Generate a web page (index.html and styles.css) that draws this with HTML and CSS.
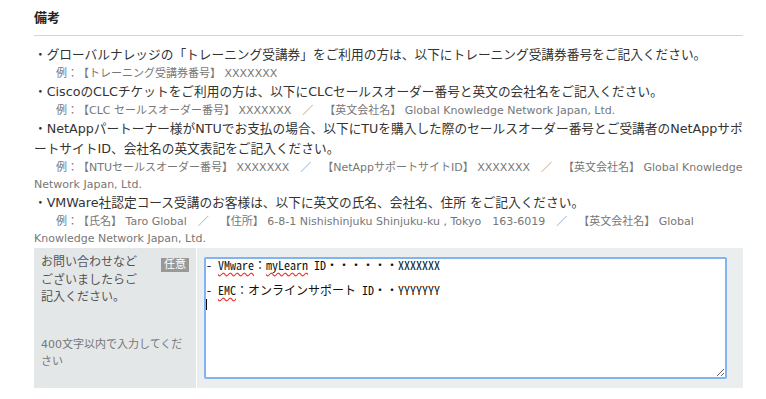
FILE: index.html
```html
<!DOCTYPE html>
<html lang="ja">
<head>
  <meta charset="UTF-8">
  <meta name="viewport" content="width=device-width, initial-scale=1.0">
  <title>備考</title>
  <link rel="stylesheet" href="styles.css">
</head>
<body>

  <!-- 備考 -->
  <div class="section">
    <h2 class="section-title">備考</h2>

    <div class="notes">
      <p class="note">・グローバルナレッジの「トレーニング受講券」をご利用の方は、以下にトレーニング受講券番号をご記入ください。</p>
      <p class="example">　　例：【トレーニング受講券番号】 XXXXXXX</p>
      <p class="note">・CiscoのCLCチケットをご利用の方は、以下にCLCセールスオーダー番号と英文の会社名をご記入ください。</p>
      <p class="example">　　例：【CLC セールスオーダー番号】 XXXXXXX　／　【英文会社名】 Global Knowledge Network Japan, Ltd.</p>
      <p class="note">・NetAppパートーナー様がNTUでお支払の場合、以下にTUを購入した際のセールスオーダー番号とご受講者のNetAppサポートサイトID、会社名の英文表記をご記入ください。</p>
      <p class="example">　　例：【NTUセールスオーダー番号】 XXXXXXX　／　【NetAppサポートサイトID】 XXXXXXX　／　【英文会社名】 Global Knowledge Network Japan, Ltd.</p>
      <p class="note">・VMWare社認定コース受講のお客様は、以下に英文の氏名、会社名、住所 をご記入ください。</p>
      <p class="example">　　例：【氏名】 Taro Global　／　【住所】 6-8-1 Nishishinjuku Shinjuku-ku , Tokyo　163-6019　／　【英文会社名】 Global Knowledge Network Japan, Ltd.</p>
    </div>

    <!-- お問い合わせ -->
    <div class="form-row">
      <div class="form-label">
        <div class="label-top">
          <span class="label-text">お問い合わせなどございましたらご記入ください。</span>
          <span class="badge">任意</span>
        </div>
        <p class="label-note">400文字以内で入力してください</p>
      </div>
      <div class="form-field">
        <div class="textarea">
          <div>- <span class="typo">VMware</span>：<span class="typo">myLearn</span> ID・・・・・・XXXXXXX</div>
          <div>&nbsp;</div>
          <div>- <span class="typo">EMC</span>：オンラインサポート ID・・YYYYYYY</div>
          <div><span class="caret"></span></div>
        </div>
      </div>
    </div>
  </div>

</body>
</html>
```

FILE: styles.css
```css
* {
  box-sizing: border-box;
  margin: 0;
  padding: 0;
}

body {
  font-family: "DejaVu Sans", "Noto Sans CJK JP", sans-serif;
  color: #333;
  background: #fff;
  text-spacing-trim: space-all;
}

.section {
  width: 709px;
  margin-left: 34px;
}

.section-title {
  font-family: "Noto Sans CJK JP", sans-serif;
  font-size: 13px;
  font-weight: bold;
  color: #222;
  line-height: 20px;
  padding: 7px 0 8px;
  border-bottom: 1px solid #d4d4d4;
}

.notes {
  padding-top: 9px;
}

.note {
  font-size: 12.7px;
  line-height: 20px;
  color: #333;
}

.example {
  font-size: 11px;
  line-height: 17px;
  color: #777;
}

/* フォーム */
.form-row {
  display: flex;
  margin-top: 1px;
  height: 140px;
}

.form-label {
  width: 163px;
  background: #e4e7e8;
  padding: 6px 7px 0;
  margin-right: 1px;
}

.label-top {
  display: flex;
  align-items: flex-start;
}

.label-text {
  width: 104px;
  font-size: 12px;
  line-height: 17.5px;
  color: #555;
}

.badge {
  margin-left: auto;
  margin-top: 4px;
  background: #999;
  color: #fff;
  font-size: 11px;
  line-height: 14px;
  padding: 0 3px;
}

.label-note {
  margin-top: 29px;
  font-size: 11px;
  line-height: 17px;
  color: #777;
}

.form-field {
  flex: 1;
  background: #ebeeef;
  padding: 9px 16px 9px 7px;
}

.textarea {
  width: 523px;
  height: 122px;
  background: #fff;
  border: 2px solid #84b3f2;
  border-radius: 2px;
  padding: 0;
  font-family: "Noto Sans Mono CJK JP", "Liberation Mono", monospace;
  font-size: 12px;
  line-height: 12.5px;
  color: #111;
  overflow: auto;
  resize: both;
}

.typo {
  text-decoration: underline wavy #e33;
  text-underline-offset: 2px;
}

.caret {
  display: inline-block;
  width: 1px;
  height: 11px;
  background: #000;
  vertical-align: middle;
}
```
